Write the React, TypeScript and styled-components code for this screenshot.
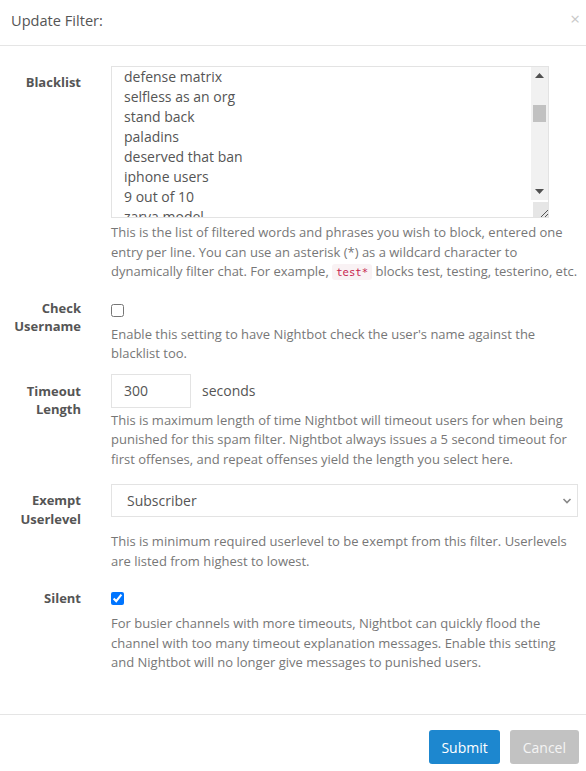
import React, { useLayoutEffect, useRef } from "react";
import styled, { createGlobalStyle } from "styled-components";

const Global = createGlobalStyle`
  html, body { margin: 0; padding: 0; background: #fff; }
  body { font-family: "Open Sans", "Liberation Sans", sans-serif; color: #555; }
  * { box-sizing: border-box; }
`;

const svgUri = (svg: string) => `url("data:image/svg+xml,${encodeURIComponent(svg)}")`;

const grip = svgUri(
  '<svg xmlns="http://www.w3.org/2000/svg" width="17" height="17" viewBox="0 0 17 17"><path d="M15 8 L8 15 M15 12 L12 15" stroke="#555" stroke-width="1"/></svg>'
);

const Modal = styled.div`
  width: 586px;
  height: 771px;
  display: flex;
  flex-direction: column;
  background: #fff;
  overflow: hidden;
`;

const Header = styled.div`
  height: 46px;
  flex: none;
  display: flex;
  align-items: center;
  justify-content: space-between;
  padding: 0 6px 0 11px;
  border-bottom: 1px solid #e5e5e5;
`;

const Title = styled.h4`
  margin: 0;
  font-size: 14.6px;
  font-weight: 400;
  color: #555;
  line-height: 20px;
  margin-top: -5px;
`;

const Close = styled.span`
  font-size: 17px;
  line-height: 1;
  color: #c8c8c8;
  margin-top: -8px;
`;

const Body = styled.div`
  flex: 1;
  padding-top: 20px;
`;

const Group = styled.div<{ $gap?: number }>`
  display: grid;
  grid-template-columns: 96px 1fr;
  margin-bottom: ${(p) => p.$gap ?? 10}px;
`;

const Label = styled.div<{ $pt?: number }>`
  text-align: right;
  padding-right: 15px;
  padding-top: ${(p) => p.$pt ?? 7}px;
  font-size: 13px;
  font-weight: 700;
  line-height: 18.5px;
  color: #555;
`;

const Control = styled.div`
  padding-left: 15px;
  padding-right: 6px;
`;

const AreaWrap = styled.div`
  position: relative;
  width: 438px;
`;

const TextArea = styled.textarea`
  display: block;
  width: 438px;
  height: 152px;
  padding: 6px 12px;
  border: 1px solid #e3e3e3;
  border-radius: 0;
  font-family: "Open Sans", "Liberation Sans", sans-serif;
  font-size: 14px;
  line-height: 20px;
  color: #555;
  resize: vertical;
  outline: none;

  &::-webkit-resizer {
    background-color: #e6e6e6;
    background-image: ${grip};
  }
`;

const Scrollbar = styled.div`
  position: absolute;
  top: 1px;
  right: 1px;
  width: 17px;
  height: 133px;
  background: #f1f1f1;
  display: flex;
  flex-direction: column;
  pointer-events: none;
`;

const ScrollButton = styled.div`
  height: 17px;
  flex: none;
  display: flex;
  align-items: center;
  justify-content: center;
`;

const ScrollTrack = styled.div`
  flex: 1;
  padding: 21px 2px 0;
`;

const Thumb = styled.div`
  height: 17px;
  background: #c1c1c1;
`;

const Help = styled.p<{ $mt?: number }>`
  margin: ${(p) => p.$mt ?? 5}px 0 0 0;
  font-size: 13px;
  line-height: 19.5px;
  color: #777;
`;

const Code = styled.code`
  font-family: "DejaVu Sans Mono", "Liberation Mono", monospace;
  font-size: 10.6px;
  color: #c7254e;
  background: #f9f2f4;
  padding: 2px 4px;
  border-radius: 3px;
`;

const CheckRow = styled.div`
  height: 27px;
  padding-top: 11px;
  display: flex;
  align-items: flex-start;
`;

const Check = styled.input`
  margin: 0;
  width: 13px;
  height: 13px;
`;

const InlineRow = styled.div`
  display: flex;
  align-items: center;
  gap: 11px;
`;

const NumberInput = styled.input`
  width: 80px;
  height: 34px;
  padding: 6px 12px;
  border: 1px solid #e3e3e3;
  border-radius: 0;
  font-family: "Open Sans", "Liberation Sans", sans-serif;
  font-size: 14px;
  color: #555;
  outline: none;
`;

const Unit = styled.span`
  font-size: 14px;
  color: #555;
`;

const SelectWrap = styled.div`
  position: relative;
  width: 467px;
`;

const Select = styled.select`
  appearance: none;
  -webkit-appearance: none;
  width: 100%;
  height: 33px;
  padding: 6px 15px;
  border: 1px solid #e3e3e3;
  border-radius: 0;
  background: #fff;
  font-family: "Open Sans", "Liberation Sans", sans-serif;
  font-size: 14px;
  color: #555;
  outline: none;
`;

const Chevron = styled.svg`
  position: absolute;
  right: 6px;
  top: 13px;
  pointer-events: none;
`;

const Footer = styled.div`
  flex: none;
  height: 57px;
  border-top: 1px solid #e5e5e5;
  display: flex;
  justify-content: flex-end;
  align-items: flex-start;
  gap: 10px;
  padding: 15px 7px 0 0;
`;

const Button = styled.button<{ $variant: "primary" | "muted" }>`
  height: 34px;
  padding: 0 ${(p) => (p.$variant === "primary" ? 12 : 13)}px;
  border: none;
  border-radius: 3px;
  font-family: "Open Sans", "Liberation Sans", sans-serif;
  font-size: 14px;
  color: ${(p) => (p.$variant === "primary" ? "#fff" : "#f4f4f4")};
  background: ${(p) => (p.$variant === "primary" ? "#1d87cf" : "#c2c2c2")};
`;

const words = [
  "ez game",
  "gg no re",
  "uninstall",
  "git gud",
  "trash tier",
  "noob team",
  "report mercy",
  "one trick",
  "hanzo main",
  "defense matrix",
  "selfless as an org",
  "stand back",
  "paladins",
  "deserved that ban",
  "iphone users",
  "9 out of 10",
  "zarya model",
  "salt lord",
  "potato aim",
  "boosted",
  "smurf",
  "toxic",
  "reported",
  "tilted",
  "bronze",
  "hard stuck",
  "carry me",
  "free elo",
  "rage quit",
  "ult bot",
  "dps only",
  "no tank",
  "grav dragon",
  "play of the game",
  "nano boost",
  "high noon",
  "ryuu ga",
  "die die die",
  "experience tranquility",
  "heroes never die",
  "cheers love",
  "justice rains",
  "witness me",
];

export default function App() {
  const ref = useRef<HTMLTextAreaElement>(null);
  useLayoutEffect(() => {
    if (ref.current) ref.current.scrollTop = 186;
  }, []);
  return (
    <>
      <Global />
      <Modal>
        <Header>
          <Title>Update Filter:</Title>
          <Close>×</Close>
        </Header>
        <Body>
          <Group>
            <Label>Blacklist</Label>
            <Control>
              <AreaWrap>
                <TextArea ref={ref} defaultValue={words.join("\n")} spellCheck={false} />
                <Scrollbar aria-hidden>
                  <ScrollButton>
                    <svg width="9" height="5" viewBox="0 0 9 5">
                      <path d="M0 5 L4.5 0 L9 5 Z" fill="#505050" />
                    </svg>
                  </ScrollButton>
                  <ScrollTrack>
                    <Thumb />
                  </ScrollTrack>
                  <ScrollButton>
                    <svg width="9" height="5" viewBox="0 0 9 5">
                      <path d="M0 0 L4.5 5 L9 0 Z" fill="#505050" />
                    </svg>
                  </ScrollButton>
                </Scrollbar>
              </AreaWrap>
              <Help>
                This is the list of filtered words and phrases you wish to block, entered one entry per
                line. You can use an asterisk (*) as a wildcard character to dynamically filter chat. For
                example, <Code>test*</Code> blocks test, testing, testerino, etc.
              </Help>
            </Control>
          </Group>
          <Group>
            <Label $pt={6}>
              Check
              <br />
              Username
            </Label>
            <Control>
              <CheckRow>
                <Check type="checkbox" />
              </CheckRow>
              <Help>Enable this setting to have Nightbot check the user's name against the blacklist too.</Help>
            </Control>
          </Group>
          <Group $gap={15}>
            <Label $pt={8}>
              Timeout
              <br />
              Length
            </Label>
            <Control>
              <InlineRow>
                <NumberInput defaultValue="300" />
                <Unit>seconds</Unit>
              </InlineRow>
              <Help $mt={3}>
                This is maximum length of time Nightbot will timeout users for when being punished for this
                spam filter. Nightbot always issues a 5 second timeout for first offenses, and repeat
                offenses yield the length you select here.
              </Help>
            </Control>
          </Group>
          <Group>
            <Label $pt={7}>
              Exempt
              <br />
              Userlevel
            </Label>
            <Control>
              <SelectWrap>
                <Select defaultValue="subscriber">
                  <option value="owner">Owner</option>
                  <option value="moderator">Moderator</option>
                  <option value="regular">Regular</option>
                  <option value="subscriber">Subscriber</option>
                  <option value="everyone">Everyone</option>
                </Select>
                <Chevron width="10" height="8" viewBox="0 0 10 8">
                  <path d="M1.5 2 L5 5.5 L8.5 2" fill="none" stroke="#888" strokeWidth="1.6" />
                </Chevron>
              </SelectWrap>
              <Help $mt={15}>
                This is minimum required userlevel to be exempt from this filter. Userlevels are listed from
                highest to lowest.
              </Help>
            </Control>
          </Group>
          <Group>
            <Label $pt={8}>Silent</Label>
            <Control>
              <CheckRow>
                <Check type="checkbox" defaultChecked />
              </CheckRow>
              <Help $mt={6}>
                For busier channels with more timeouts, Nightbot can quickly flood the channel with too many
                timeout explanation messages. Enable this setting and Nightbot will no longer give messages
                to punished users.
              </Help>
            </Control>
          </Group>
        </Body>
        <Footer>
          <Button $variant="primary">Submit</Button>
          <Button $variant="muted">Cancel</Button>
        </Footer>
      </Modal>
    </>
  );
}
